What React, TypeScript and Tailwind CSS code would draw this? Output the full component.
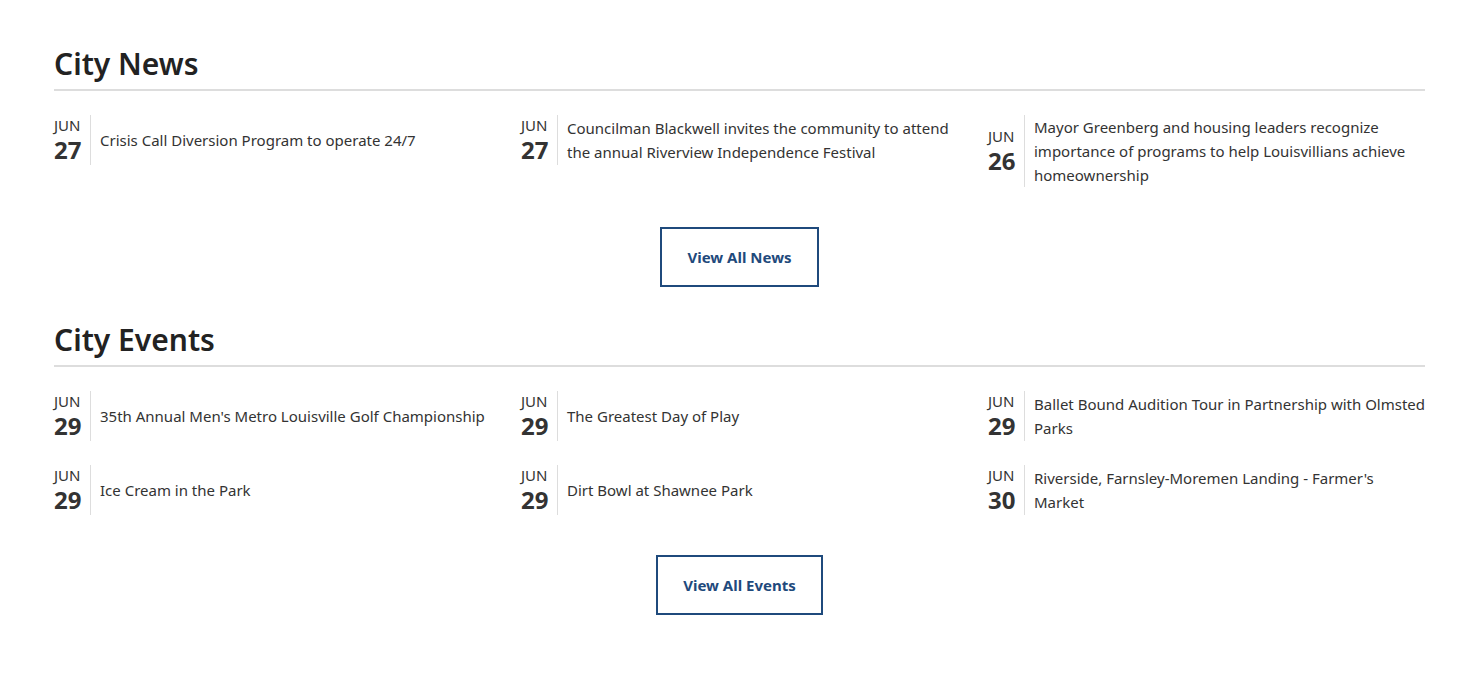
const news = [
  { m: "JUN", d: "27", t: "Crisis Call Diversion Program to operate 24/7" },
  { m: "JUN", d: "27", t: "Councilman Blackwell invites the community to attend the annual Riverview Independence Festival" },
  { m: "JUN", d: "26", t: "Mayor Greenberg and housing leaders recognize importance of programs to help Louisvillians achieve homeownership" },
];

const events = [
  { m: "JUN", d: "29", t: "35th Annual Men's Metro Louisville Golf Championship" },
  { m: "JUN", d: "29", t: "The Greatest Day of Play" },
  { m: "JUN", d: "29", t: "Ballet Bound Audition Tour in Partnership with Olmsted Parks" },
  { m: "JUN", d: "29", t: "Ice Cream in the Park" },
  { m: "JUN", d: "29", t: "Dirt Bowl at Shawnee Park" },
  { m: "JUN", d: "30", t: "Riverside, Farnsley-Moremen Landing - Farmer's Market" },
];

function Item({ m, d, t }: { m: string; d: string; t: string }) {
  return (
    <a href="#" className="flex items-center">
      <div className="flex min-h-[50px] w-[37px] shrink-0 flex-col self-stretch justify-center border-r border-[#ddd]">
        <span className="text-[15px] leading-[20px] text-[#333]">{m}</span>
        <span className="text-[24px] font-bold leading-[30px] text-[#333]">{d}</span>
      </div>
      <p className="w-[402px] pl-[9px] text-[15px] leading-[24px] text-[#333]">{t}</p>
    </a>
  );
}

function Section({ title, items, button, btnW }: { title: string; items: typeof news; button: string; btnW: string }) {
  return (
    <section>
      <h2 className="border-b-2 border-[#ddd] pb-[4px] text-[30px] font-semibold leading-[42px] text-[#222]">{title}</h2>
      <div className="mr-[-30px] mt-[24px] grid grid-cols-[467px_467px_467px] items-start gap-y-[24px]">
        {items.map((it, i) => (
          <Item key={i} {...it} />
        ))}
      </div>
      <div className="mt-[40px] flex justify-center">
        <a href="#" className={`flex h-[60px] items-center justify-center border-2 border-[#1f4a7c] text-[15px] font-bold text-[#1f4a7c] ${btnW}`}>
          {button}
        </a>
      </div>
    </section>
  );
}

export default function App() {
  return (
    <div className="min-h-[673px] overflow-hidden bg-white pl-[54px] pr-[38px] pt-[43px]" style={{ fontFamily: '"Noto Sans", "Open Sans", sans-serif' }}>
      <Section title="City News" items={news} button="View All News" btnW="w-[159px]" />
      <div className="mt-[32px]">
        <Section title="City Events" items={events} button="View All Events" btnW="w-[167px]" />
      </div>
    </div>
  );
}
